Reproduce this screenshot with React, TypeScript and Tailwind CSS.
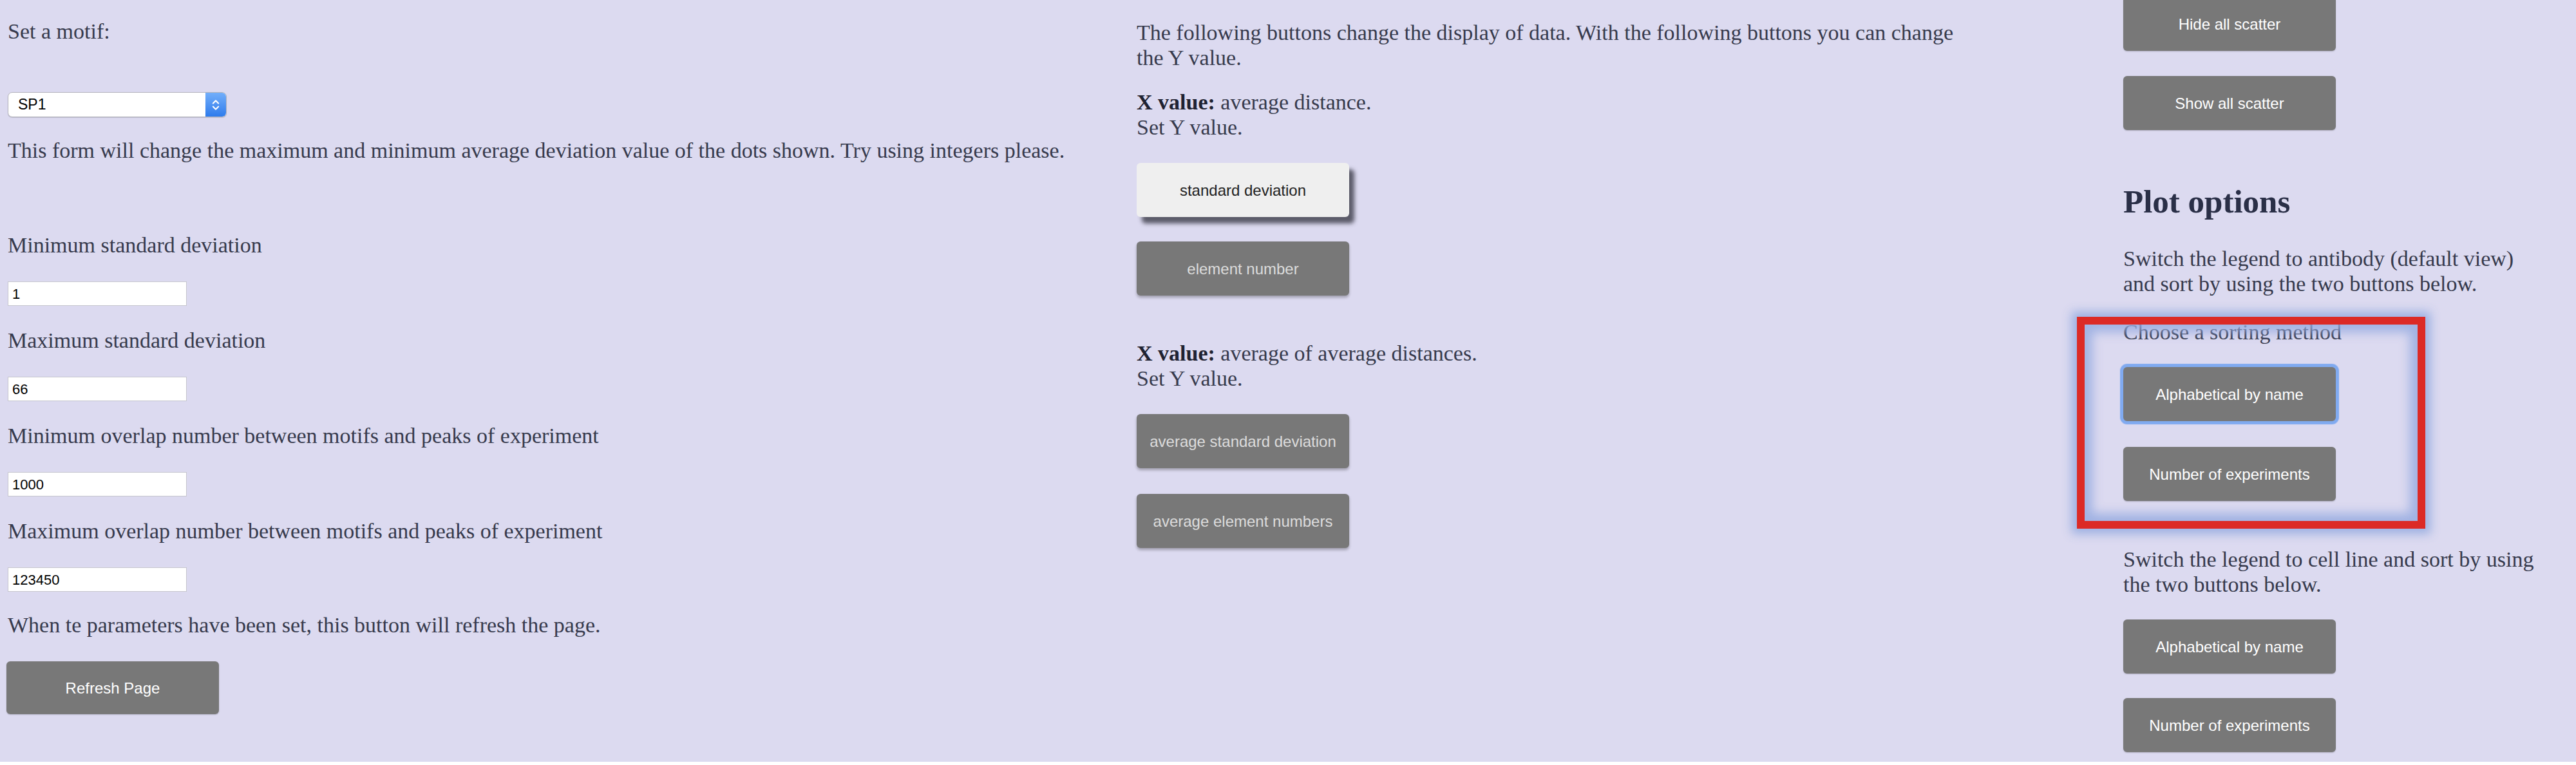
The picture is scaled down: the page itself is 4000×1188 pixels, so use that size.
import { ChevronsUpDown } from 'lucide-react';

const sans = "font-['Liberation_Sans',Arial,sans-serif]";

function Field({ value }: { value: string }) {
  return (
    <input
      readOnly
      value={value}
      className={`mt-[37px] block h-[38px] w-[278px] border border-[#c6c6ce] bg-white px-[6px] text-[22px] text-black outline-none ${sans}`}
    />
  );
}

function GrayButton({ label, className = '', light = false }: { label: string; className?: string; light?: boolean }) {
  return (
    <button
      className={`block h-[84px] w-[330px] rounded-[6px] bg-[#787878] text-[24px] ${
        light ? 'text-[#dcdcdc] shadow-[0_3px_4px_rgba(0,0,0,0.28)]' : 'text-white shadow-[0_1px_2px_rgba(0,0,0,0.2)]'
      } ${sans} ${className}`}
    >
      {label}
    </button>
  );
}

export default function App() {
  return (
    <div className="h-[1183px] w-[4000px] overflow-hidden bg-[#dcdaf0] font-['Liberation_Serif','Times_New_Roman',serif] text-[34px] leading-[39px] text-[#373a4d]">
      <div className="flex pl-[12px]">
        {/* Filter form */}
        <div className="w-[1753px] shrink-0 pt-[29px]">
          <p>Set a motif:</p>
          <div className="mt-[75px] flex h-[39px] w-[340px] items-center overflow-hidden rounded-[7px] border border-[#b3b3bb] bg-white shadow-[0_1px_1px_rgba(0,0,0,0.15)]">
            <span className={`flex-1 pl-[15px] text-[23px] leading-none text-black ${sans}`}>SP1</span>
            <span className="flex h-full w-[32px] items-center justify-center bg-linear-to-b from-[#72aefa] to-[#2d7bec]">
              <ChevronsUpDown size={20} color="white" strokeWidth={2.5} />
            </span>
          </div>
          <p className="mt-[32px]">
            This form will change the maximum and minimum average deviation value of the dots shown. Try using integers please.
          </p>
          <p className="mt-[108px]">Minimum standard deviation</p>
          <Field value="1" />
          <p className="mt-[34px]">Maximum standard deviation</p>
          <Field value="66" />
          <p className="mt-[34px]">Minimum overlap number between motifs and peaks of experiment</p>
          <Field value="1000" />
          <p className="mt-[34px]">Maximum overlap number between motifs and peaks of experiment</p>
          <Field value="123450" />
          <p className="mt-[32px]">When te parameters have been set, this button will refresh the page.</p>
          <button className={`-ml-[2px] mt-[37px] block h-[82px] w-[330px] rounded-[6px] bg-[#787878] text-[24px] text-white shadow-[0_1px_2px_rgba(0,0,0,0.2)] ${sans}`}>
            Refresh Page
          </button>
        </div>

        {/* Display of data */}
        <div className="w-[1532px] shrink-0 pt-[31px]">
          <p className="w-[1300px]">
            The following buttons change the display of data. With the following buttons you can change the Y value.
          </p>
          <p className="mt-[30px]">
            <b className="text-[#1f2231]">X value:</b> average distance.
            <br />
            Set Y value.
          </p>
          <button
            className={`mt-[36px] block h-[84px] w-[330px] rounded-[6px] bg-[#efefef] text-[24px] text-[#222] shadow-[8px_10px_6px_rgba(50,50,62,0.75)] ${sans}`}
          >
            standard deviation
          </button>
          <GrayButton label="element number" light className="mt-[38px]" />
          <p className="mt-[70px]">
            <b className="text-[#1f2231]">X value:</b> average of average distances.
            <br />
            Set Y value.
          </p>
          <GrayButton label="average standard deviation" light className="mt-[36px]" />
          <GrayButton label="average element numbers" light className="mt-[40px]" />
        </div>

        {/* Plot options */}
        <div className="relative w-[650px] shrink-0">
          <GrayButton label="Hide all scatter" className="-mt-[5px]" />
          <GrayButton label="Show all scatter" className="mt-[39px]" />
          <h2 className="mt-[82px] text-[51px] font-bold leading-[58px] text-[#2a2f47]">Plot options</h2>
          <p className="mt-[40px]">Switch the legend to antibody (default view) and sort by using the two buttons below.</p>
          <p className="mt-[36px]">Choose a sorting method</p>
          <GrayButton label="Alphabetical by name" className="mt-[35px] !shadow-[0_0_1px_5px_rgba(118,164,240,0.9)]" />
          <GrayButton label="Number of experiments" className="mt-[40px]" />
          <p className="mt-[71px]">Switch the legend to cell line and sort by using the two buttons below.</p>
          <GrayButton label="Alphabetical by name" className="mt-[35px]" />
          <GrayButton label="Number of experiments" className="mt-[38px]" />

          {/* highlight annotation */}
          <div className="pointer-events-none absolute left-[-72px] top-[492px] h-[329px] w-[541px] border-[12px] border-[#dc2a26] shadow-[0_0_14px_8px_rgba(150,172,224,0.9),inset_0_0_16px_12px_rgba(150,172,224,0.85)]" />
        </div>
      </div>
    </div>
  );
}
